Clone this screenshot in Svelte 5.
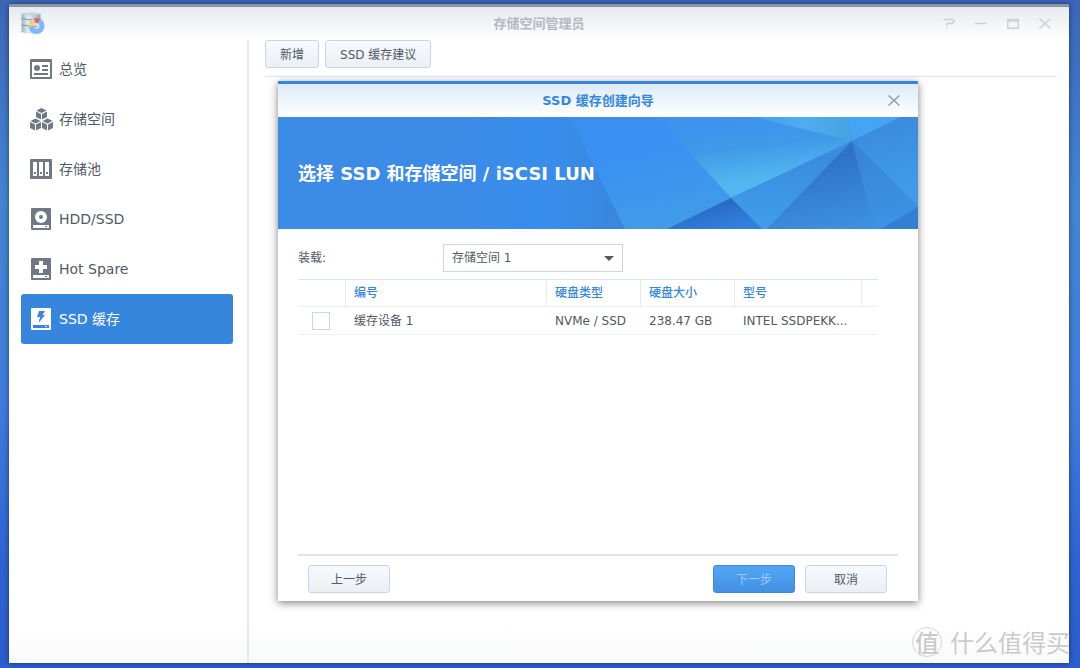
<script>
  let menu = [
    { id: 'overview', label: '总览' },
    { id: 'volume', label: '存储空间' },
    { id: 'pool', label: '存储池' },
    { id: 'hdd', label: 'HDD/SSD' },
    { id: 'spare', label: 'Hot Spare' },
    { id: 'cache', label: 'SSD 缓存' }
  ];
  let current = 'cache';

  let volumes = ['存储空间 1'];
  let volume = volumes[0];

  let devices = [
    { name: '缓存设备 1', type: 'NVMe / SSD', size: '238.47 GB', model: 'INTEL SSDPEKK...', checked: false }
  ];
</script>

<div class="desktop">
  <div class="window">
    <header class="titlebar">
      <svg class="app-icon" viewBox="0 0 24 24" width="24" height="24">
        <defs>
          <linearGradient id="drum" x1="0" x2="1">
            <stop offset="0" stop-color="#9db3c4" />
            <stop offset="0.35" stop-color="#e6f0f6" />
            <stop offset="1" stop-color="#92a7ba" />
          </linearGradient>
        </defs>
        <path d="M0.5 2Q10 -0.5 19.5 2V20Q10 23.5 0.5 20Z" fill="url(#drum)" />
        <ellipse cx="10" cy="2" rx="9.5" ry="1.500" fill="#c3d3df" />
        <path d="M0.5 6.5Q10 9.5 19.5 6.5M0.5 13Q10 15.5 19.5 13" fill="none" stroke="#8094a6" />
        <circle cx="15.5" cy="14" r="8" fill="#7db9f2" />
        <path d="M15.5 14L7.5 14.5A8 8 0 0 1 13 6.4Z" fill="#f7cd78" />
        <path d="M15.5 14L13 6.4A8 8 0 0 1 19 6.8Z" fill="#e26565" />
        <circle cx="15.5" cy="14" r="3" fill="#d5e0ea" />
        <path d="M12 14.5h4" stroke="#8a9baa" />
      </svg>
      <h1>存储空间管理员</h1>
      <div class="controls">
        <button aria-label="帮助">
          <svg viewBox="0 0 12 12" width="12" height="12"><path d="M0.500 1.500H8.500Q11 1.500 11 3.500T8.500 5.500H4V7.500M4 9V10.500" /></svg>
        </button>
        <button aria-label="最小化">
          <svg viewBox="0 0 12 12" width="12" height="12"><path d="M0 5.500H12" /></svg>
        </button>
        <button aria-label="最大化">
          <svg viewBox="0 0 12 12" width="12" height="12"><path d="M0.750 1.500H11.250V10.250H0.750ZM0 3H12" /></svg>
        </button>
        <button aria-label="关闭">
          <svg viewBox="0 0 12 12" width="12" height="12"><path d="M0.500 0.500L11.500 10.500M11.500 0.500L0.500 10.500" /></svg>
        </button>
      </div>
    </header>

    <div class="content">
      <nav>
        {#each menu as item}
          <a href="#{item.id}" class:active={item.id === current}>
            <svg viewBox="0 0 24 24" width="24" height="24">
              {#if item.id === 'overview'}
                <path fill-rule="evenodd" d="M2 2H22Q23 2 23 3V21Q23 22 22 22H2Q1 22 1 21V3Q1 2 2 2ZM3 5V20H21V5Z" />
                <circle cx="8" cy="11" r="3" />
                <path d="M13 8H19V10H13ZM13 12H19V14H13ZM5 16H19V18H5Z" />
              {:else if item.id === 'volume'}
                <path d="M12.500 1L17.500 3.500L12.500 6L7.500 3.500ZM7 4.500L12 7V12.500L7 10ZM18 4.500L13 7V12.500L18 10Z" />
                <path d="M6.500 11.500L11.500 14L6.500 16.500L1.500 14ZM1 15L6 17.500V23.500L1 21ZM12 15L7 17.500V23.500L12 21Z" />
                <path d="M18.500 11.500L23.500 14L18.500 16.500L13.500 14ZM13 15L18 17.500V23.500L13 21ZM24 15L19 17.500V23.500L24 21Z" />
              {:else if item.id === 'pool'}
                <path fill-rule="evenodd" d="M2 2H22Q23 2 23 3V21Q23 22 22 22H2Q1 22 1 21V3Q1 2 2 2ZM4 5V19H8V5ZM10 5V19H14V5ZM16 5V19H20V5Z" />
                <path d="M5 15H7V17H5ZM11 15H13V17H11ZM17 15H19V17H17Z" />
              {:else}
                <path d="M3 1H21Q22 1 22 2V22Q22 23 21 23H3Q2 23 2 22V2Q2 1 3 1Z" />
                <path class="cut" fill-rule="evenodd" d="M4 18H20V21H4ZM16 19V20H18V19Z" />
                {#if item.id === 'hdd'}
                  <circle class="cut" cx="12" cy="10" r="6" />
                  <circle cx="12" cy="10" r="2" />
                {:else if item.id === 'spare'}
                  <path class="cut" d="M10 4H14V8H18V12H14V16H10V12H6V8H10Z" />
                {:else}
                  <path class="cut" d="M10 4H16L13.500 8H16L9.500 16L11 10H8Z" />
                {/if}
              {/if}
            </svg>
            <span>{item.label}</span>
          </a>
        {/each}
      </nav>

      <main>
        <div class="toolbar">
          <button class="btn">新增</button>
          <button class="btn">SSD 缓存建议</button>
        </div>
      </main>
    </div>

    <div class="wizard" role="dialog" aria-labelledby="wizard-title">
      <div class="wizard-header">
        <h2 id="wizard-title">SSD 缓存创建向导</h2>
        <button aria-label="关闭向导">
          <svg viewBox="0 0 12 12" width="12" height="12"><path d="M0.500 0.500L11.500 10.500M11.500 0.500L0.500 10.500" /></svg>
        </button>
      </div>

      <div class="banner">
        <svg viewBox="0 0 640 112" preserveAspectRatio="xMaxYMid slice" aria-hidden="true">
          <defs>
            <linearGradient id="base" x1="0" x2="1">
              <stop offset="0.3" stop-color="#3b8be7" />
              <stop offset="0.4" stop-color="#398dec" />
              <stop offset="0.46" stop-color="#398be7" />
              <stop offset="0.54" stop-color="#3986dc" />
            </linearGradient>
            <linearGradient id="left" x1="0.4" y1="0" x2="0.7" y2="1">
              <stop offset="0.3" stop-color="#3a91f2" />
              <stop offset="1" stop-color="#429ce8" />
            </linearGradient>
            <linearGradient id="bright" x1="0.35" y1="0" x2="0.6" y2="0.9">
              <stop offset="0" stop-color="#3c92ef" />
              <stop offset="0.4" stop-color="#4099e8" />
              <stop offset="0.85" stop-color="#51b7f0" />
            </linearGradient>
            <linearGradient id="top" x1="0" x2="1">
              <stop offset="0" stop-color="#429ff1" />
              <stop offset="0.5" stop-color="#4eacf1" />
              <stop offset="1" stop-color="#46a5df" />
            </linearGradient>
            <linearGradient id="mid" x1="0.6" y1="0.2" x2="0.6" y2="1">
              <stop offset="0" stop-color="#3a8ce0" />
              <stop offset="1" stop-color="#429ee9" />
            </linearGradient>
            <linearGradient id="dark" x1="0.4" y1="0" x2="0.65" y2="1">
              <stop offset="0.2" stop-color="#2d72c7" />
              <stop offset="1" stop-color="#3d8fe0" />
            </linearGradient>
            <linearGradient id="low" x1="0.2" y1="0.4" x2="0.6" y2="1">
              <stop offset="0" stop-color="#286bc5" />
              <stop offset="1" stop-color="#3180dc" />
            </linearGradient>
            <linearGradient id="side" x1="0.4" y1="0" x2="0.6" y2="1">
              <stop offset="0" stop-color="#3983d3" />
              <stop offset="1" stop-color="#3c94e7" />
            </linearGradient>
            <linearGradient id="right" x1="0.4" y1="0" x2="0.6" y2="1">
              <stop offset="0" stop-color="#3b89dd" />
              <stop offset="0.8" stop-color="#3f9aea" />
            </linearGradient>
          </defs>
          <path fill="url(#base)" d="M0 0H640V112H0Z" />
          <path fill="url(#left)" d="M292 0H379L453 81L389 112H347Z" />
          <path fill="url(#bright)" d="M379 0H475L574 24L453 81Z" />
          <path fill="url(#top)" d="M475 0H569L574 24Z" />
          <path fill="#45a4f3" d="M569 0H623L574 24Z" />
          <path fill="url(#mid)" d="M574 24L453 81L484 112H489Z" />
          <path fill="url(#low)" d="M453 81L389 112H484Z" />
          <path fill="url(#dark)" d="M574 24L489 112H597Z" />
          <path fill="url(#right)" d="M574 24L623 0H640V90Z" />
          <path fill="url(#side)" d="M574 24L640 90L603 112H597Z" />
          <path fill="#337fd3" d="M603 112L640 90V112Z" />
        </svg>
        <h3>选择 SSD 和存储空间 / iSCSI LUN</h3>
      </div>

      <div class="wizard-body">
        <div class="field">
          <label for="volume">装载:</label>
          <div class="select">
            <select id="volume" bind:value={volume}>
              {#each volumes as v}
                <option value={v}>{v}</option>
              {/each}
            </select>
          </div>
        </div>

        <table>
          <colgroup>
            <col class="col-check" />
            <col />
            <col class="col-info" />
            <col class="col-info" />
            <col class="col-model" />
            <col class="col-end" />
          </colgroup>
          <thead>
            <tr>
              <th></th>
              <th>编号</th>
              <th>硬盘类型</th>
              <th>硬盘大小</th>
              <th>型号</th>
              <th></th>
            </tr>
          </thead>
          <tbody>
            {#each devices as device}
              <tr>
                <td class="check"><input type="checkbox" aria-label={device.name} bind:checked={device.checked} /></td>
                <td>{device.name}</td>
                <td>{device.type}</td>
                <td>{device.size}</td>
                <td>{device.model}</td>
                <td></td>
              </tr>
            {/each}
          </tbody>
        </table>
      </div>

      <footer>
        <button class="btn">上一步</button>
        <button class="btn primary">下一步</button>
        <button class="btn">取消</button>
      </footer>
    </div>
  </div>

  <div class="watermark">
    <span class="badge">值</span>
    <span>什么值得买</span>
  </div>
</div>

<style>
  :global(body) {
    margin: 0;
  }

  .desktop {
    position: relative;
    box-sizing: border-box;
    display: flex;
    min-height: 100vh;
    padding: 4px 11px 5px 9px;
    overflow: hidden;
    background: linear-gradient(#3c66b6, #4485d0 30%, #417cdb 60%, #2f62d2 85%, #2d5dcc);
    color: #505a64;
    font: 12px/18px Verdana, 'DejaVu Sans', 'Noto Sans CJK SC', sans-serif;
  }

  h1,
  h2,
  h3 {
    margin: 0;
    font-size: 13px;
  }

  button,
  select {
    font: inherit;
    color: inherit;
  }

  .window {
    position: relative;
    flex: 1;
    display: flex;
    flex-direction: column;
    border-top: 3px solid #8b94a2;
    background: linear-gradient(#fff 94%, #f8f9fa);
    box-shadow: 0 0 5px rgba(0, 20, 70, 0.6);
  }

  .titlebar {
    display: grid;
    grid-template-columns: 1fr auto 1fr;
    align-items: center;
    height: 33px;
    padding: 0 12px;
    background: linear-gradient(#e6e9ef, #fff);
  }

  .titlebar h1 {
    color: #b3b9c1;
  }

  .controls {
    display: flex;
    justify-content: flex-end;
    gap: 20px;
    padding-right: 6px;
  }

  .controls button,
  .wizard-header button {
    display: flex;
    padding: 0;
    border: 0;
    background: none;
  }

  .controls path,
  .wizard-header path {
    fill: none;
    stroke: #cdd0d5;
    stroke-width: 1.5;
  }

  .content {
    flex: 1;
    display: flex;
  }

  nav {
    box-sizing: border-box;
    width: 240px;
    padding: 4px 14px 0 12px;
    border-right: 2px solid #e6e8ea;
  }

  nav a {
    display: flex;
    align-items: center;
    gap: 6px;
    height: 50px;
    padding-left: 8px;
    border-radius: 3px;
    color: #505a64;
    font-size: 14px;
    text-decoration: none;
  }

  nav svg {
    fill: #707884;
  }

  nav .cut {
    fill: #fff;
  }

  nav .active {
    background: #3786dd;
    color: #fff;
  }

  nav .active svg {
    fill: #fff;
  }

  nav .active .cut {
    fill: #3786dd;
  }

  main {
    flex: 1;
    padding: 0 12px 0 16px;
  }

  .toolbar {
    display: flex;
    gap: 6px;
    padding-bottom: 8px;
    border-bottom: 1px solid #dbe6ef;
  }

  .btn {
    height: 28px;
    padding: 2px 14px 0;
    border: 1px solid #ccd5df;
    border-radius: 3px;
    background: linear-gradient(#f7fafe, #ebeff4);
  }

  .wizard {
    position: absolute;
    top: 74px;
    left: 269px;
    display: flex;
    flex-direction: column;
    width: 640px;
    border-top: 3px solid #3786dd;
    background: #fff;
    box-shadow: 0 2px 8px rgba(0, 0, 0, 0.5);
  }

  .wizard-header {
    display: grid;
    grid-template-columns: 1fr auto 1fr;
    align-items: center;
    height: 33px;
    padding: 0 18px;
    background: linear-gradient(#dcebf8, #fff);
  }

  .wizard-header h2 {
    grid-column: 2;
    color: #3786dd;
  }

  .wizard-header button {
    justify-self: end;
  }

  .wizard-header path {
    stroke: #969da5;
  }

  .banner {
    display: grid;
    align-items: center;
    height: 112px;
  }

  .banner svg,
  .banner h3 {
    grid-area: 1 / 1;
  }

  .banner svg {
    width: 100%;
    height: 112px;
  }

  .banner h3 {
    z-index: 1;
    padding: 2px 20px 0;
    color: #fff;
    font-size: 18px;
    line-height: 24px;
  }

  .wizard-body {
    min-height: 310px;
    padding: 15px 40px 0 20px;
  }

  .field {
    display: flex;
    align-items: center;
    margin-bottom: 7px;
  }

  .field label {
    width: 145px;
  }

  .select {
    position: relative;
    width: 180px;
  }

  .select::after {
    content: '';
    position: absolute;
    top: 12px;
    right: 9px;
    border: 5px solid transparent;
    border-top-color: #505a64;
    border-bottom: 0;
    pointer-events: none;
  }

  select {
    appearance: none;
    display: block;
    width: 100%;
    height: 28px;
    padding: 0 24px 0 8px;
    border: 1px solid #ccd6df;
    border-radius: 0;
    background: #fff;
  }

  table {
    width: 100%;
    table-layout: fixed;
    border-spacing: 0;
    border-top: 1px solid #dbe5ee;
  }

  .col-check {
    width: 48px;
  }

  .col-info {
    width: 94px;
  }

  .col-model {
    width: 127px;
  }

  .col-end {
    width: 16px;
  }

  th,
  td {
    box-sizing: border-box;
    height: 28px;
    padding: 0 8px;
    overflow: hidden;
    border-bottom: 1px solid #eaf0f6;
    text-align: left;
    text-overflow: ellipsis;
    white-space: nowrap;
  }

  th {
    height: 27px;
    border-right: 1px solid #e1ebf4;
    color: #3786dd;
    font-weight: 500;
  }

  th:last-child {
    border-right: 0;
  }

  .check {
    padding: 0 0 0 14px;
  }

  input {
    appearance: none;
    display: block;
    width: 18px;
    height: 18px;
    margin: 0;
    border: 1px solid #ccd6df;
    background: #fff;
  }

  input:checked {
    background: #3786dd;
  }

  footer {
    display: flex;
    gap: 10px;
    margin: 0 20px;
    padding: 9px 11px 8px 10px;
    border-top: 2px solid #e2e3e5;
  }

  footer .btn {
    width: 82px;
    padding: 2px 0 0;
  }

  footer .btn:first-child {
    margin-right: auto;
  }

  .primary {
    border-color: #3c8ade;
    background: linear-gradient(#52a5f5, #4291e3);
    color: #9bcdfb;
  }

  .watermark {
    position: absolute;
    right: 10px;
    bottom: 10px;
    display: flex;
    align-items: center;
    gap: 8px;
    color: #cacaca;
    font: 24px/32px 'Noto Sans CJK SC', sans-serif;
    text-shadow: -1px -1px #fff;
  }

  .badge {
    width: 28px;
    border: 1px solid #d5d5d5;
    border-radius: 50%;
    font-weight: 500;
    line-height: 28px;
    text-align: center;
  }
</style>
